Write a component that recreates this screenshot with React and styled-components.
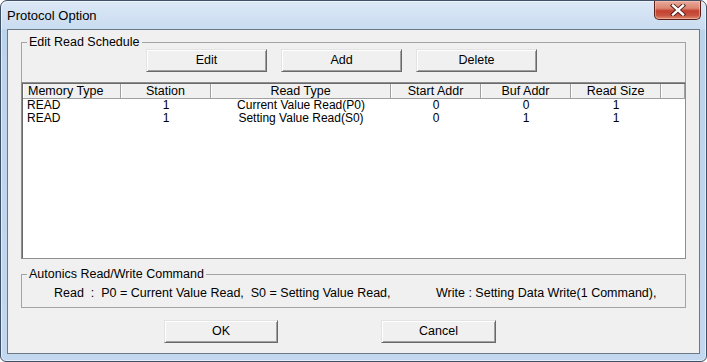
import React from "react";
import styled, { createGlobalStyle } from "styled-components";

const Global = createGlobalStyle`
  html, body { margin: 0; padding: 0; background: #ffffff; }
  #root { width: 707px; height: 362px; }
  * { box-sizing: border-box; }
`;

const Window = styled.div`
  width: 707px;
  height: 362px;
  display: flex;
  flex-direction: column;
  padding: 0 6px 7px 6px;
  border: 1px solid #3f5168;
  border-radius: 7px 7px 6px 6px;
  background: linear-gradient(to bottom, #dbe8f6 0px, #cadcf0 28px, #bcd3ec 29px, #c3d8ef 100%);
  box-shadow: inset 0 0 0 1px rgba(255, 255, 255, 0.55);
  font-family: "Liberation Sans", Arial, sans-serif;
`;

const TitleBar = styled.div`
  height: 28px;
  display: flex;
  align-items: flex-start;
`;

const Title = styled.div`
  padding: 7px 0 0 0;
  font-size: 13px;
  line-height: 15px;
  color: #000;
`;

const CloseButton = styled.div`
  margin-left: auto;
  margin-right: -1px;
  width: 47px;
  height: 19px;
  border: 1px solid #5a2019;
  border-top: none;
  border-radius: 0 0 5px 5px;
  background: linear-gradient(to bottom, #e9a99b 0%, #dc8672 40%, #c4402f 55%, #c85440 80%, #e08e72 100%);
  box-shadow: inset 0 0 0 1px rgba(255, 210, 200, 0.45);
  display: flex;
  align-items: center;
  justify-content: center;
`;

const Client = styled.div`
  flex: 1;
  border: 1px solid #6b7886;
  background: #f0f0f0;
  padding: 5px 13px 0 13px;
  display: flex;
  flex-direction: column;
  font-size: 12.5px;
  color: #000;
`;

const GroupBox = styled.fieldset`
  margin: ${(p) => p.$mt}px 0 0 0;
  padding: ${(p) => p.$pad};
  border: 1px solid #a3a3a3;
  min-width: 0;
`;

const Legend = styled.legend`
  margin-left: 5px;
  padding: 0 2px;
  font-size: 12.5px;
  line-height: 14px;
  height: 14px;
`;

const ButtonRow = styled.div`
  display: flex;
  gap: ${(p) => p.$gap}px;
  padding-left: ${(p) => p.$left}px;
`;

const Button = styled.div`
  width: ${(p) => p.$w}px;
  height: 23px;
  background: #f0f0f0;
  border-top: 1px solid #e3e3e3;
  border-left: 1px solid #e3e3e3;
  border-right: 1px solid #696969;
  border-bottom: 1px solid #696969;
  box-shadow: inset 1px 1px 0 #ffffff, inset -1px -1px 0 #a0a0a0;
  display: flex;
  align-items: center;
  justify-content: center;
  font-size: 12.5px;
  line-height: 14px;
  padding-bottom: 1px;
`;

const List = styled.div`
  margin: 10px -1px -1px -1px;
  height: 177px;
  background: #ffffff;
  border: 1px solid #8e8e8e;
  box-shadow: inset 1px 1px 0 #696969;
  padding: 1px 0 0 1px;
  display: flex;
  flex-direction: column;
`;

const Grid = styled.div`
  display: grid;
  grid-template-columns: 98px 90px 180px 90px 90px 90px 1fr;
`;

const HeaderCell = styled.div`
  height: 15px;
  background: #f0f0f0;
  border-right: 1px solid #a0a0a0;
  border-bottom: 1px solid #a0a0a0;
  box-shadow: inset 1px 0 0 #ffffff;
  line-height: 14px;
  font-size: 12.5px;
  text-align: ${(p) => (p.$left ? "left" : "center")};
  padding-left: ${(p) => (p.$left ? 5 : 0)}px;
  white-space: nowrap;
  overflow: hidden;
`;

const Cell = styled.div`
  height: 13px;
  line-height: 13px;
  font-size: 12px;
  text-align: ${(p) => (p.$left ? "left" : "center")};
  padding-left: ${(p) => (p.$left ? 4 : 0)}px;
  white-space: nowrap;
`;

const CommandLine = styled.div`
  display: grid;
  grid-template-columns: 382px auto;
  padding-left: 32px;
  line-height: 14px;
  font-size: 12.5px;
  white-space: pre;
`;

const columns = ["Memory Type", "Station", "Read Type", "Start Addr", "Buf Addr", "Read Size", ""];
const rows = [
  ["READ", "1", "Current Value Read(P0)", "0", "0", "1", ""],
  ["READ", "1", "Setting Value Read(S0)", "0", "1", "1", ""],
];

export default function App() {
  return (
    <>
      <Global />
      <Window>
        <TitleBar>
          <Title>Protocol Option</Title>
          <CloseButton>
            <svg width="16" height="12" viewBox="0 0 16 12">
              <path d="M3 1.5 L13 10.5 M13 1.5 L3 10.5" stroke="#4a1a14" strokeWidth="4.2" strokeLinecap="square" />
              <path d="M3 1.5 L13 10.5 M13 1.5 L3 10.5" stroke="#ffffff" strokeWidth="2.4" strokeLinecap="square" />
            </svg>
          </CloseButton>
        </TitleBar>
        <Client>
          <GroupBox $mt={0} $pad="0">
            <Legend>Edit Read Schedule</Legend>
            <ButtonRow $gap={14} $left={124}>
              <Button $w={121}>Edit</Button>
              <Button $w={121}>Add</Button>
              <Button $w={121}>Delete</Button>
            </ButtonRow>
            <List>
              <Grid>
                {columns.map((c, i) => (
                  <HeaderCell key={i} $left={i === 0}>{c}</HeaderCell>
                ))}
                {rows.map((r, ri) =>
                  r.map((v, ci) => (
                    <Cell key={ri + "-" + ci} $left={ci === 0}>{v}</Cell>
                  ))
                )}
              </Grid>
            </List>
          </GroupBox>
          <GroupBox $mt={8} $pad="5px 0 7px 0">
            <Legend>Autonics Read/Write Command</Legend>
            <CommandLine>
              <span>{"Read  :  P0 = Current Value Read,  S0 = Setting Value Read,"}</span>
              <span>{"Write : Setting Data Write(1 Command),"}</span>
            </CommandLine>
          </GroupBox>
          <ButtonRow $gap={103} $left={143} style={{ marginTop: 12 }}>
            <Button $w={114}>OK</Button>
            <Button $w={115}>Cancel</Button>
          </ButtonRow>
        </Client>
      </Window>
    </>
  );
}
